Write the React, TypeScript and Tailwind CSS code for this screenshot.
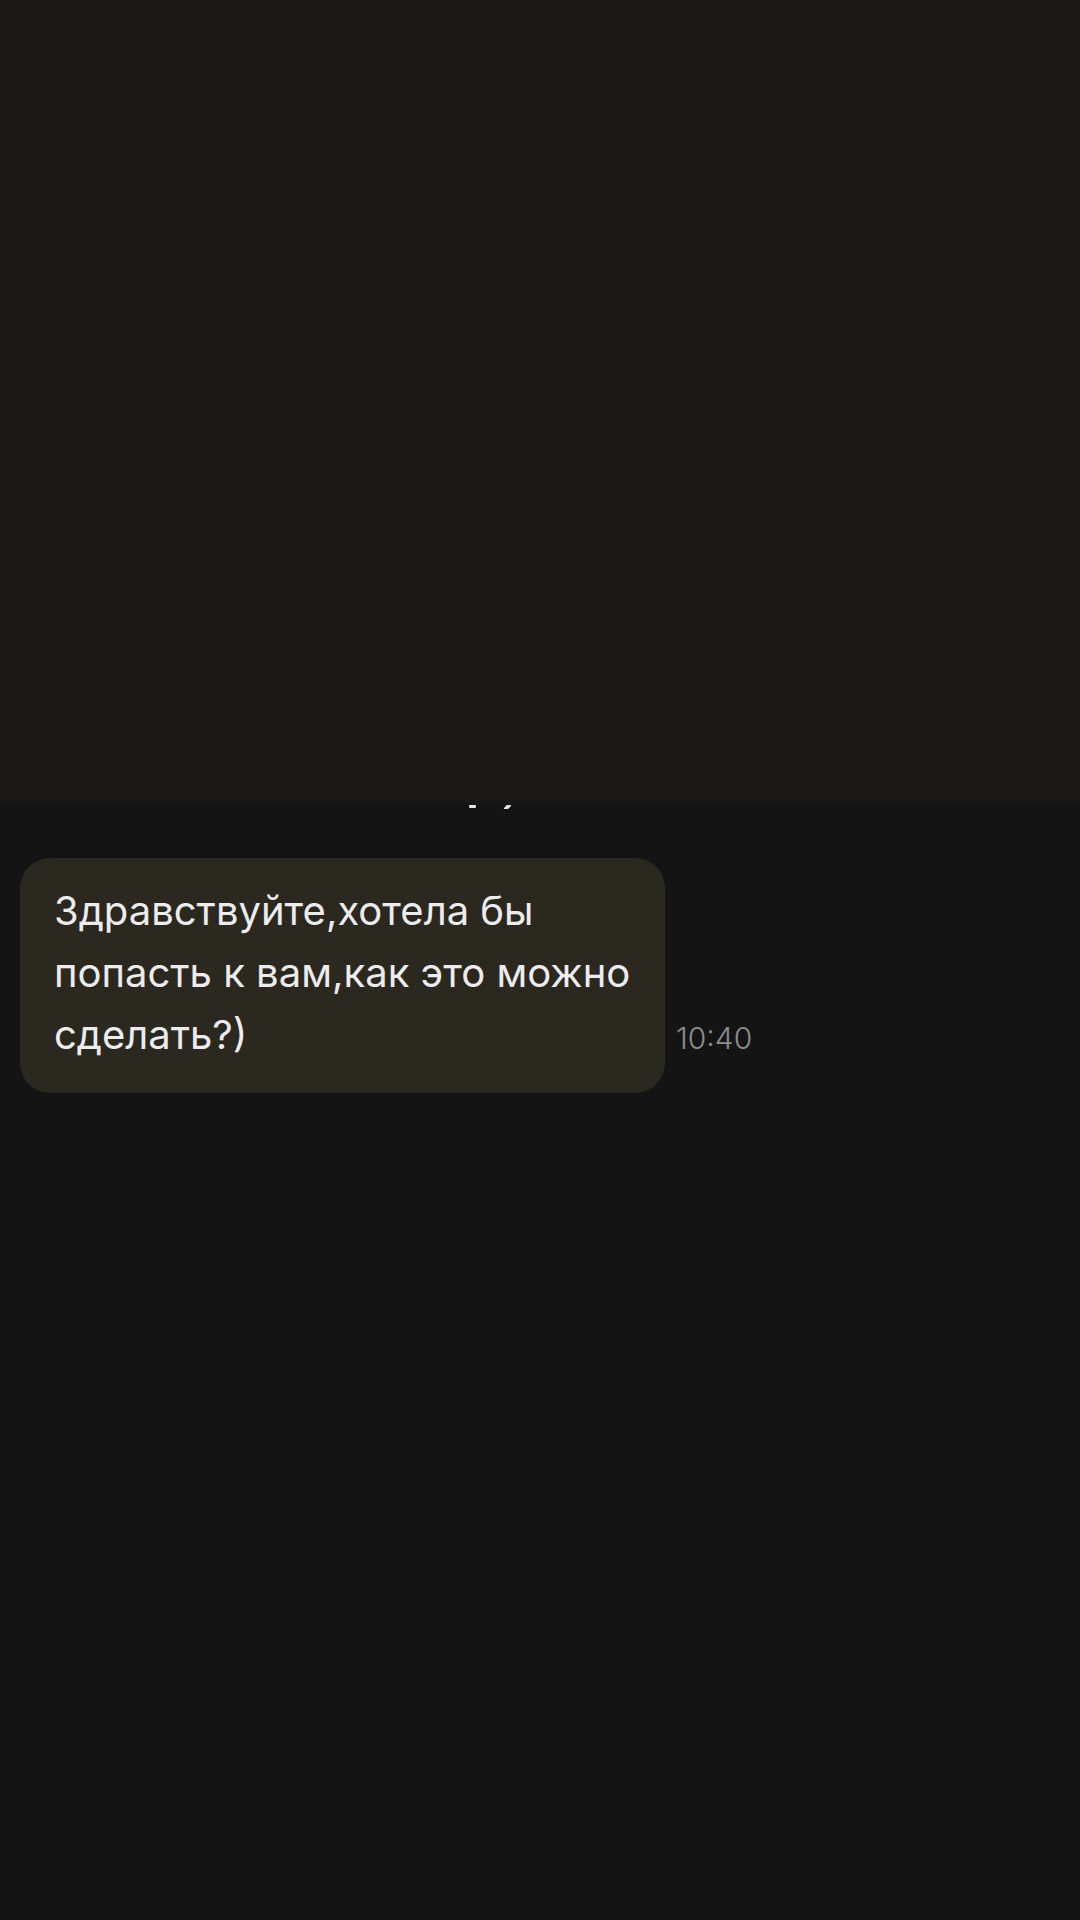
import React from "react";

const Message: React.FC<{ text: string; time: string }> = ({ text, time }) => {
  return (
    <div className="flex items-end pl-[20px]">
      <div className="w-[645px] rounded-[30px] bg-[#2b2820] pl-[34px] pr-[8px] pt-[22px] pb-[27px]">
        <p className="text-[40px] leading-[62px] text-[#ececec] font-['Inter',sans-serif]">{text}</p>
      </div>
      <span className="ml-[11px] mb-[37px] text-[30px] leading-[36px] text-[#8c8c8c] font-['Inter',sans-serif] font-light">
        {time}
      </span>
    </div>
  );
};

export default function App() {
  return (
    <div className="w-[1080px] min-h-[1920px] bg-[#151414] flex flex-col">
      {/* upper area, slightly lighter */}
      <div className="h-[803px] bg-[#191817]" />

      {/* clipped remains of a header line */}
      <div className="flex items-start pt-[2px] pl-[469px] h-[55px]">
        <span className="block w-[7px] h-[3px] rounded-[1px] bg-[#e6e6e6]" />
        <span className="block ml-[29px] w-[5px] h-[4px] rounded-[1px] bg-[#e6e6e6] -skew-x-[40deg]" />
      </div>

      <Message text="Здравствуйте,хотела бы попасть к вам,как это можно сделать?)" time="10:40" />
    </div>
  );
}
